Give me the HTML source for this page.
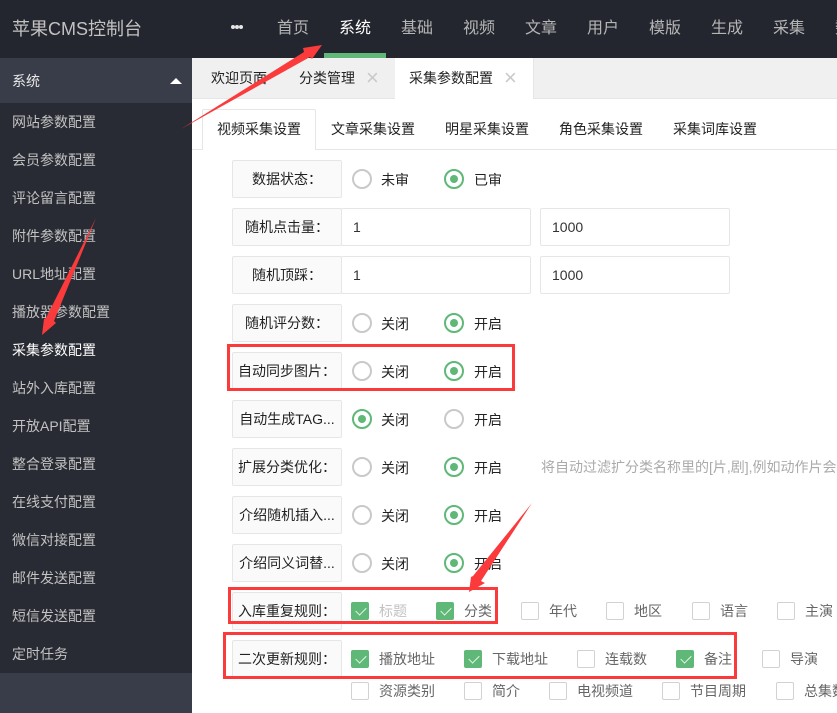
<!DOCTYPE html>
<html lang="zh-CN">
<head>
<meta charset="utf-8">
<title>苹果CMS控制台</title>
<style>
html,body{margin:0;padding:0}
body{width:837px;height:713px;overflow:hidden;position:relative;background:#fff;font-family:"Liberation Sans","Noto Sans CJK SC",sans-serif;font-size:14px;color:#333}
div,span{position:absolute;box-sizing:border-box}
.t{white-space:nowrap;line-height:20px;height:20px}
.n{font-size:16px;color:#b5b5b5;top:18px;line-height:22px;white-space:nowrap}
.s{left:12px;color:#c2c2c2;white-space:nowrap;line-height:20px}
.l{left:232px;width:110px;height:38px;background:#fafafa;border:1px solid #e6e6e6;border-radius:2px;text-align:center;line-height:36px;color:#222;white-space:nowrap;overflow:hidden}
.i{height:38px;border:1px solid #e6e6e6;border-radius:2px;background:#fff;line-height:36px;padding-left:11px;color:#333;width:190px}
.r{width:20px;height:20px;border:2px solid #c9c9c9;border-radius:50%;background:#fff}
.r.o{border-color:#5fb878}
.r.o:after{content:"";position:absolute;left:4px;top:4px;width:8px;height:8px;border-radius:50%;background:#5fb878}
.c{width:18px;height:18px;border:1px solid #d2d2d2;border-radius:2px;background:#fff}
.c.o{background:#5fb878;border-color:#5fb878}
.c.o:after{content:"";position:absolute;left:4px;top:4px;width:9px;height:5px;border-left:1.5px solid #e8f5ec;border-bottom:1.5px solid #e8f5ec;transform:rotate(-45deg)}
.g{color:#666}
.k{color:#222}
.x{color:#c9c9c9;font-size:22px;top:68px;width:12px;text-align:center}
.b{border:3px solid #fb3b3b;background:transparent}
</style>
</head>
<body>
<!-- header -->
<div style="left:0;top:0;width:837px;height:58px;background:#23262e"></div>
<div class="t" style="left:12px;top:17px;font-size:18px;line-height:24px;height:24px;color:#c2c2c2">苹果CMS控制台</div>
<div style="left:231px;top:25px;width:4px;height:4px;border-radius:50%;background:#e6e6e6"></div>
<div style="left:235px;top:25px;width:4px;height:4px;border-radius:50%;background:#e6e6e6"></div>
<div style="left:239px;top:25px;width:4px;height:4px;border-radius:50%;background:#e6e6e6"></div>
<div class="n" style="left:277px">首页</div>
<div class="n" style="left:339px;color:#fff">系统</div>
<div class="n" style="left:401px">基础</div>
<div class="n" style="left:463px">视频</div>
<div class="n" style="left:525px">文章</div>
<div class="n" style="left:587px">用户</div>
<div class="n" style="left:649px">模版</div>
<div class="n" style="left:711px">生成</div>
<div class="n" style="left:773px">采集</div>
<div class="n" style="left:835px">数据</div>
<div style="left:324px;top:53px;width:62px;height:5px;background:#5fb878"></div>

<!-- sidebar -->
<div style="left:0;top:58px;width:192px;height:655px;background:#282b33"></div>
<div style="left:0;top:58px;width:192px;height:45px;background:#393d49"></div>
<div style="left:0;top:673px;width:192px;height:40px;background:#393d49"></div>
<div class="s" style="top:71px;color:#e8e8e8">系统</div>
<div style="left:170px;top:78px;width:0;height:0;border-left:6px solid transparent;border-right:6px solid transparent;border-bottom:6px solid #fff"></div>
<div class="s" style="top:112px">网站参数配置</div>
<div class="s" style="top:150px">会员参数配置</div>
<div class="s" style="top:188px">评论留言配置</div>
<div class="s" style="top:226px">附件参数配置</div>
<div class="s" style="top:264px">URL地址配置</div>
<div class="s" style="top:302px">播放器参数配置</div>
<div class="s" style="top:340px;color:#fff">采集参数配置</div>
<div class="s" style="top:378px">站外入库配置</div>
<div class="s" style="top:416px">开放API配置</div>
<div class="s" style="top:454px">整合登录配置</div>
<div class="s" style="top:492px">在线支付配置</div>
<div class="s" style="top:530px">微信对接配置</div>
<div class="s" style="top:568px">邮件发送配置</div>
<div class="s" style="top:606px">短信发送配置</div>
<div class="s" style="top:644px">定时任务</div>

<!-- top tabs -->
<div style="left:192px;top:58px;width:645px;height:41px;background:#f0f0f0;border-bottom:1px solid #e6e6e6"></div>
<div style="left:395px;top:58px;width:139px;height:41px;background:#fff;border-right:1px solid #e6e6e6"></div>
<div class="t k" style="left:211px;top:68px">欢迎页面</div>
<div class="t k" style="left:299px;top:68px">分类管理</div>
<div class="t x" style="left:366px">×</div>
<div class="t k" style="left:409px;top:68px">采集参数配置</div>
<div class="t x" style="left:504px">×</div>

<!-- sub tabs -->
<div style="left:192px;top:149px;width:645px;height:1px;background:#e6e6e6"></div>
<div style="left:202px;top:109px;width:114px;height:41px;background:#fff;border:1px solid #e6e6e6;border-bottom:0;border-radius:2px 2px 0 0"></div>
<div class="t k" style="left:217px;top:119px">视频采集设置</div>
<div class="t k" style="left:331px;top:119px">文章采集设置</div>
<div class="t k" style="left:445px;top:119px">明星采集设置</div>
<div class="t k" style="left:559px;top:119px">角色采集设置</div>
<div class="t k" style="left:673px;top:119px">采集词库设置</div>

<!-- form -->
<div class="l" style="top:160px">数据状态：</div>
<div class="r" style="left:352px;top:169px"></div><div class="t k" style="left:381px;top:170px">未审</div>
<div class="r o" style="left:444px;top:169px"></div><div class="t k" style="left:474px;top:170px">已审</div>

<div class="l" style="top:208px">随机点击量：</div>
<div class="i" style="left:341px;top:208px">1</div>
<div class="i" style="left:540px;top:208px">1000</div>

<div class="l" style="top:256px">随机顶踩：</div>
<div class="i" style="left:341px;top:256px">1</div>
<div class="i" style="left:540px;top:256px">1000</div>

<div class="l" style="top:304px">随机评分数：</div>
<div class="r" style="left:352px;top:313px"></div><div class="t k" style="left:381px;top:314px">关闭</div>
<div class="r o" style="left:444px;top:313px"></div><div class="t k" style="left:474px;top:314px">开启</div>

<div class="l" style="top:352px">自动同步图片：</div>
<div class="r" style="left:352px;top:361px"></div><div class="t k" style="left:381px;top:362px">关闭</div>
<div class="r o" style="left:444px;top:361px"></div><div class="t k" style="left:474px;top:362px">开启</div>

<div class="l" style="top:400px">自动生成TAG...</div>
<div class="r o" style="left:352px;top:409px"></div><div class="t k" style="left:381px;top:410px">关闭</div>
<div class="r" style="left:444px;top:409px"></div><div class="t k" style="left:474px;top:410px">开启</div>

<div class="l" style="top:448px">扩展分类优化：</div>
<div class="r" style="left:352px;top:457px"></div><div class="t k" style="left:381px;top:458px">关闭</div>
<div class="r o" style="left:444px;top:457px"></div><div class="t k" style="left:474px;top:458px">开启</div>
<div class="t" style="left:541px;top:457px;color:#aaa">将自动过滤扩分类名称里的[片,剧],例如动作片会</div>

<div class="l" style="top:496px">介绍随机插入...</div>
<div class="r" style="left:352px;top:505px"></div><div class="t k" style="left:381px;top:506px">关闭</div>
<div class="r o" style="left:444px;top:505px"></div><div class="t k" style="left:474px;top:506px">开启</div>

<div class="l" style="top:544px">介绍同义词替...</div>
<div class="r" style="left:352px;top:553px"></div><div class="t k" style="left:381px;top:554px">关闭</div>
<div class="r o" style="left:444px;top:553px"></div><div class="t k" style="left:474px;top:554px">开启</div>

<div class="l" style="top:592px">入库重复规则：</div>
<div class="c o" style="left:351px;top:602px"></div><div class="t" style="left:379px;top:601px;color:#c2c2c2">标题</div>
<div class="c o" style="left:436px;top:602px"></div><div class="t g" style="left:464px;top:601px">分类</div>
<div class="c" style="left:521px;top:602px"></div><div class="t g" style="left:549px;top:601px">年代</div>
<div class="c" style="left:606px;top:602px"></div><div class="t g" style="left:634px;top:601px">地区</div>
<div class="c" style="left:692px;top:602px"></div><div class="t g" style="left:720px;top:601px">语言</div>
<div class="c" style="left:777px;top:602px"></div><div class="t g" style="left:805px;top:601px">主演</div>

<div class="l" style="top:640px">二次更新规则：</div>
<div class="c o" style="left:351px;top:650px"></div><div class="t g" style="left:379px;top:649px">播放地址</div>
<div class="c o" style="left:464px;top:650px"></div><div class="t g" style="left:492px;top:649px">下载地址</div>
<div class="c" style="left:577px;top:650px"></div><div class="t g" style="left:605px;top:649px">连载数</div>
<div class="c o" style="left:676px;top:650px"></div><div class="t g" style="left:704px;top:649px">备注</div>
<div class="c" style="left:762px;top:650px"></div><div class="t g" style="left:790px;top:649px">导演</div>

<div class="c" style="left:351px;top:682px"></div><div class="t g" style="left:379px;top:681px">资源类别</div>
<div class="c" style="left:464px;top:682px"></div><div class="t g" style="left:492px;top:681px">简介</div>
<div class="c" style="left:549px;top:682px"></div><div class="t g" style="left:577px;top:681px">电视频道</div>
<div class="c" style="left:662px;top:682px"></div><div class="t g" style="left:690px;top:681px">节目周期</div>
<div class="c" style="left:776px;top:682px"></div><div class="t g" style="left:804px;top:681px">总集数</div>

<!-- annotations -->
<div class="b" style="left:227px;top:344px;width:288px;height:47px"></div>
<div class="b" style="left:228px;top:587px;width:270px;height:37px"></div>
<div class="b" style="left:223px;top:632px;width:514px;height:47px"></div>
<svg width="837" height="713" style="position:absolute;left:0;top:0;pointer-events:none">
<polygon fill="#fb3b3b" points="181,129 304,52 303,48 322,45 312,59 310,57"/>
<polygon fill="#fb3b3b" points="96,218 54,321 56,323 42,335 44,319 46,318"/>
<polygon fill="#fb3b3b" points="532,503 481,581 485,583 469,592 471,577 473,576"/>
</svg>
</body>
</html>
